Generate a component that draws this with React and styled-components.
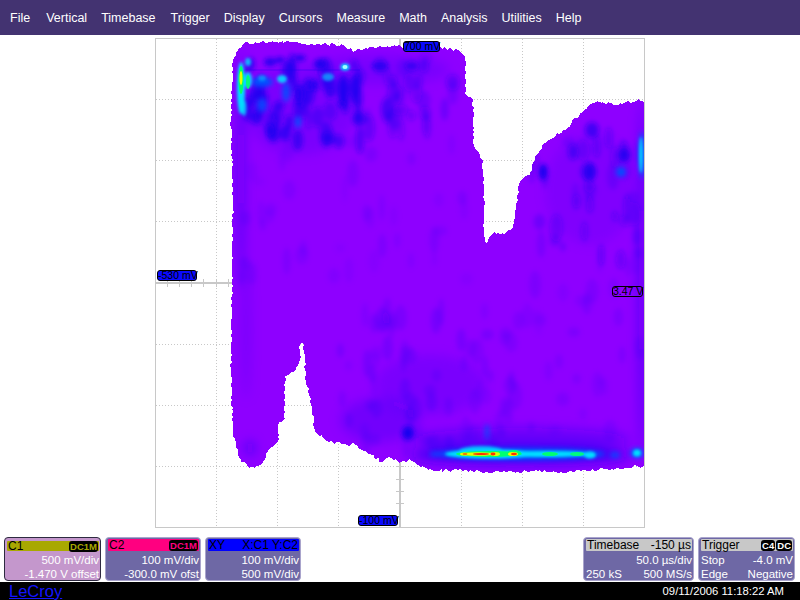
import React from 'react';
import styled, { createGlobalStyle } from 'styled-components';

const GlobalStyle = createGlobalStyle`
  html, body {
    margin: 0;
    padding: 0;
    background: #fff;
    font-family: "Liberation Sans", Arial, sans-serif;
  }
`;

const Screen = styled.div`
  width: 800px;
  height: 600px;
  display: flex;
  flex-direction: column;
  overflow: hidden;
`;

const MenuBar = styled.nav`
  height: 35px;
  flex: none;
  background: #433371;
  display: flex;
  align-items: center;
  gap: 14px;
  padding: 0 0 0 10px;
  color: #fff;
  font-size: 12.5px;
`;

const MenuItem = styled.span`
  margin-right: ${({ $extra }) => $extra || 0}px;
`;

const Stage = styled.main`
  flex: 1;
  display: flex;
  justify-content: center;
  padding-top: 3px;
`;

const Plot = styled.div`
  position: relative;
  width: 490px;
  height: 490px;
`;

const PlotSvg = styled.svg`
  display: block;
`;

const Marker = styled.span`
  position: absolute;
  left: ${({ $x }) => $x}px;
  top: ${({ $y }) => $y}px;
  width: ${({ $w }) => $w}px;
  height: 11px;
  box-sizing: border-box;
  border: 1px solid #000;
  border-radius: 3px;
  background: ${({ $clear }) => ($clear ? 'transparent' : '#0a0aff')};
  color: #000;
  font-size: 10.5px;
  line-height: 9px;
  text-align: center;
  white-space: nowrap;
`;

const InfoStrip = styled.section`
  height: 44px;
  flex: none;
  margin-bottom: 1px;
  padding: 0 5px 0 4px;
  display: flex;
  gap: 4px;
`;

const Spacer = styled.div`
  flex: 1;
`;

const Card = styled.div`
  width: ${({ $w }) => $w}px;
  height: 44px;
  box-sizing: border-box;
  border: 1px solid ${({ $active }) => ($active ? '#2e2a40' : '#a9a4cc')};
  border-radius: 4px;
  background: ${({ $active }) => ($active ? '#c497cc' : '#6e68a5')};
  color: #fff;
  font-size: 11.5px;
  line-height: 14px;
  padding: ${({ $active }) => ($active ? '3px' : '1px')} 1px 0 2px;
  display: flex;
  flex-direction: column;
`;

const CardTitle = styled.div`
  height: ${({ $short }) => ($short ? '10px' : '12px')};
  line-height: 12px;
  background: ${({ $color }) => $color};
  color: #000;
  display: flex;
  justify-content: space-between;
  align-items: center;
  padding: 0 1px;
  margin-bottom: 2px;
  border-radius: 1px;
  font-size: 12px;
  white-space: nowrap;
`;

const Badges = styled.span`
  display: flex;
  gap: 1px;
`;

const Coupling = styled.span`
  background: #000;
  color: ${({ $color }) => $color};
  font-size: 9.5px;
  font-weight: bold;
  line-height: 11px;
  padding: 0 1px;
  border-radius: 3px;
`;

const CardRow = styled.div`
  display: flex;
  justify-content: ${({ $split }) => ($split ? 'space-between' : 'flex-end')};
  height: 14px;
  white-space: nowrap;
`;

const Footer = styled.footer`
  height: 18px;
  flex: none;
  background: #000;
  display: flex;
  justify-content: space-between;
  align-items: center;
  padding: 0 16px 0 9px;
`;

const Brand = styled.a`
  color: #1414ff;
  font-size: 16.5px;
  text-decoration: underline;
  line-height: 18px;
`;

const Clock = styled.span`
  color: #fff;
  font-size: 11.3px;
`;

const menu = [
  ['File', 2], ['Vertical'], ['Timebase', 1], ['Trigger'], ['Display'], ['Cursors'],
  ['Measure'], ['Math'], ['Analysis'], ['Utilities'], ['Help'],
];

// trace outline, page coordinates
const outline = [
  [232, 283], [233, 200], [231, 120], [233, 60], [239, 48], [245, 43], [265, 42], [287, 42],
  [315, 44], [340, 45], [353, 50], [375, 48], [397, 46], [403, 47], [430, 47], [458, 50],
  [465, 57], [466, 80], [466, 96], [473, 98], [473, 143], [482, 160], [484, 190], [484, 235],
  [487, 242], [493, 232], [502, 235], [513, 228], [519, 187], [522, 178], [530, 175],
  [535, 157], [547, 140], [570, 127], [573, 120], [593, 102], [617, 104], [640, 100], [644, 102],
  [644, 300], [644, 466], [583, 471], [500, 472], [433, 470], [420, 467], [410, 460], [400, 462],
  [388, 457], [383, 462], [367, 453], [353, 443], [350, 445], [330, 442], [315, 432], [312, 407],
  [305, 377], [305, 360], [303, 343], [300, 345], [300, 360], [295, 370], [285, 375], [285, 417],
  [278, 423], [278, 442], [268, 450], [265, 460], [258, 467], [250, 468], [240, 460], [237, 447],
  [233, 437], [231, 360],
];

function makeRandom(start) {
  let seed = start;
  return () => {
    seed = (seed * 137 + 29) % 1009;
    return seed / 1009;
  };
}

function roughen(points) {
  const next = makeRandom(17);
  const out = [];
  points.forEach((p, i) => {
    const q = points[(i + 1) % points.length];
    const dx = q[0] - p[0];
    const dy = q[1] - p[1];
    const steps = Math.max(1, Math.round(Math.hypot(dx, dy) / 2.5));
    const straight = p[0] >= 644 && q[0] >= 644;
    const amp = straight ? 0 : Math.abs(dx) > Math.abs(dy) ? 3.2 : 1.6;
    for (let s = 0; s < steps; s++) {
      const t = s / steps;
      const x = p[0] + dx * t + (next() - 0.5) * amp;
      const y = p[1] + dy * t + (next() - 0.5) * amp;
      out.push(`${Math.round(x)},${Math.round(y)}`);
    }
  });
  return out.join(' ');
}

const BLUE = '#1800f0';
const MID = '#0050ff';
const CYAN = '#00e0ff';
const GREEN = '#00ff70';
const YELLOW = '#e8ff00';
const RED = '#ff3000';

// mottled texture: [x0, y0, x1, y1, count, strength]
function scatter([x0, y0, x1, y1, count, strength], seed) {
  const next = makeRandom(seed);
  return Array.from({ length: count }, () => [
    x0 + next() * (x1 - x0),
    y0 + next() * (y1 - y0),
    3 + next() * 4,
    5 + next() * 9,
    BLUE,
    strength * (0.4 + next() * 0.6),
  ]);
}

const texture = [
  ...scatter([245, 55, 360, 150, 50, 0.75], 11),
  ...scatter([350, 55, 465, 130, 30, 0.35], 23),
  ...scatter([240, 140, 470, 280, 40, 0.12], 37),
  ...scatter([530, 130, 640, 260, 36, 0.32], 53),
  ...scatter([520, 260, 640, 440, 30, 0.12], 71),
  ...scatter([340, 310, 520, 445, 70, 0.17], 97),
];

// [cx, cy, rx, ry, colour, opacity]
const wide = [
  [241, 170, 2, 120, BLUE, 0.7], [246, 330, 4, 70, BLUE, 0.18], [250, 448, 5, 7, BLUE, 0.5],
  [300, 110, 55, 45, BLUE, 0.14], [380, 70, 70, 15, BLUE, 0.15],
  [430, 385, 55, 30, BLUE, 0.14], [380, 420, 40, 22, BLUE, 0.2],
  [520, 440, 110, 12, BLUE, 0.35], [520, 455, 110, 8, BLUE, 0.8], [642, 280, 2, 180, BLUE, 0.8],
  [590, 190, 45, 55, BLUE, 0.1],
];

const mid = [
  [270, 62, 6, 4, BLUE, 0.9], [280, 60, 5, 3, BLUE, 0.9], [300, 58, 6, 3, BLUE, 0.9],
  [320, 64, 6, 5, BLUE, 0.9], [262, 82, 11, 5, MID, 1], [286, 92, 4, 10, MID, 0.9],
  [298, 95, 3, 9, BLUE, 0.9], [262, 105, 5, 7, MID, 0.8], [298, 122, 3, 6, MID, 1],
  [315, 85, 3, 6, BLUE, 0.8], [342, 104, 3, 3, BLUE, 0.9], [270, 130, 4, 7, BLUE, 0.6],
  [380, 66, 8, 4, BLUE, 0.8], [412, 66, 7, 5, BLUE, 0.6], [400, 110, 8, 6, BLUE, 0.3],
  [543, 172, 4, 8, BLUE, 1], [592, 130, 7, 8, BLUE, 0.6], [590, 172, 6, 9, BLUE, 0.8],
  [621, 172, 5, 5, MID, 1], [624, 155, 6, 7, BLUE, 0.8], [573, 152, 5, 8, BLUE, 0.5],
  [408, 433, 6, 7, BLUE, 1], [487, 432, 2, 8, MID, 0.9], [642, 155, 3, 24, MID, 1],
  [520, 454, 85, 6, MID, 1], [435, 454, 5, 2, MID, 1], [615, 455, 5, 3, MID, 0.9],
  [637, 453, 7, 5, MID, 1],
];

const hot = [
  [241, 88, 4, 26, CYAN, 1], [244, 108, 2.5, 8, CYAN, 0.8], [248, 62, 3, 4, CYAN, 0.8],
  [248, 80, 4, 8, CYAN, 0.9], [262, 78, 4, 3, CYAN, 0.5], [282, 79, 5, 4, CYAN, 0.9],
  [345, 67, 4.5, 3.5, CYAN, 1], [328, 77, 6, 4, CYAN, 0.6], [641, 155, 2, 18, CYAN, 0.9],
  [490, 454, 45, 4.5, CYAN, 1], [545, 454, 50, 3, CYAN, 1], [590, 455, 6, 3.5, CYAN, 1],
  [637, 453, 4, 3.5, CYAN, 1], [481, 451, 22, 5, CYAN, 0.8],
];

const core = [
  [241, 80, 2.5, 14, GREEN, 1], [241, 78, 1.5, 7, YELLOW, 1], [248, 82, 2, 7, GREEN, 0.9],
  [345, 67, 2.5, 2, '#a0ffff', 1], [489, 454, 33, 3, GREEN, 1], [550, 454, 8, 2, GREEN, 1],
  [577, 454, 7, 2, GREEN, 0.9], [514, 453, 7, 3, GREEN, 1], [478, 454, 17, 1.8, YELLOW, 1],
  [464, 454, 4, 1.6, YELLOW, 1], [513, 454, 5, 2, YELLOW, 1], [495, 454, 5, 2, YELLOW, 0.9],
];

const red = [
  [481, 454, 8, 1, RED, 1], [465, 454, 2.5, 0.9, RED, 0.7], [514, 454, 3, 1.2, RED, 1],
  [493, 454, 2.5, 1.4, RED, 1],
];

function Blobs({ items, filter }) {
  return (
    <g filter={`url(#${filter})`}>
      {items.map(([cx, cy, rx, ry, fill, op], i) => (
        <ellipse key={i} cx={cx} cy={cy} rx={rx} ry={ry} fill={fill} fillOpacity={op} />
      ))}
    </g>
  );
}

const gridX = [216.5, 277.5, 338.5, 461.5, 522.5, 583.5];
const gridY = [99.5, 160.5, 221.5, 344.5, 405.5, 466.5];
const ticks = Array.from({ length: 39 }, (_, i) => 167 + i * 12.25);
const tracePoints = roughen(outline);

function Scope() {
  return (
    <PlotSvg width="490" height="490" viewBox="155 38 490 490">
      <defs>
        <clipPath id="trace">
          <polygon points={tracePoints} />
        </clipPath>
        <filter id="b8" x="-50%" y="-50%" width="200%" height="200%"><feGaussianBlur stdDeviation="6" /></filter>
        <filter id="b3" x="-50%" y="-50%" width="200%" height="200%"><feGaussianBlur stdDeviation="2.5" /></filter>
        <filter id="b2" x="-50%" y="-100%" width="200%" height="300%"><feGaussianBlur stdDeviation="1.4" /></filter>
        <filter id="b1" x="-50%" y="-100%" width="200%" height="300%"><feGaussianBlur stdDeviation="0.7" /></filter>
      </defs>
      <g stroke="#c8c8c8" strokeWidth="1" strokeDasharray="1 2" shapeRendering="crispEdges">
        {gridX.map((x) => <line key={x} x1={x} x2={x} y1="39" y2="527" />)}
        {gridY.map((y) => <line key={y} x1="156" x2="644" y1={y} y2={y} />)}
      </g>
      <g stroke="#c8c8c8" shapeRendering="crispEdges">
        <line x1="156" x2="644" y1="283" y2="283" strokeWidth="2" />
        <line x1="400" x2="400" y1="39" y2="527" strokeWidth="2" />
        {ticks.map((t) => <line key={t} x1={t} x2={t} y1="279" y2="287" />)}
        {ticks.map((t) => <line key={t} x1="396" x2="404" y1={t - 129} y2={t - 129} />)}
      </g>
      <rect x="155.5" y="38.5" width="489" height="489" fill="none" stroke="#c8c8c8" strokeWidth="1.5" shapeRendering="crispEdges" />
      <polygon points={tracePoints} fill="#8e00ff" shapeRendering="crispEdges" />
      <g clipPath="url(#trace)">
        <Blobs items={wide} filter="b8" />
        <Blobs items={texture} filter="b3" />
        <Blobs items={mid} filter="b3" />
        <line x1="240" x2="360" y1="70" y2="70" stroke={BLUE} strokeOpacity="0.4" />
        <Blobs items={hot} filter="b2" />
        <Blobs items={core} filter="b1" />
        <Blobs items={red} filter="b1" />
      </g>
    </PlotSvg>
  );
}

function App() {
  return (
    <Screen>
      <GlobalStyle />
      <MenuBar>
        {menu.map(([label, extra]) => (
          <MenuItem key={label} $extra={extra}>{label}</MenuItem>
        ))}
      </MenuBar>
      <Stage>
        <Plot>
          <Scope />
          <Marker $x={248} $y={3} $w={37}>700 mV</Marker>
          <Marker $x={2} $y={232} $w={40}>-530 mV</Marker>
          <Marker $x={457} $y={248} $w={31} $clear>3.47 V</Marker>
          <Marker $x={203} $y={477} $w={40}>-100 mV</Marker>
        </Plot>
      </Stage>
      <InfoStrip>
        <Card $w={97} $active>
          <CardTitle $short $color="#a8a800">C1<Coupling $color="#a8a800">DC1M</Coupling></CardTitle>
          <CardRow>500 mV/div</CardRow>
          <CardRow>-1.470 V offset</CardRow>
        </Card>
        <Card $w={96}>
          <CardTitle $color="#ff0080">C2<Coupling $color="#ff0080">DC1M</Coupling></CardTitle>
          <CardRow>100 mV/div</CardRow>
          <CardRow>-300.0 mV ofst</CardRow>
        </Card>
        <Card $w={96}>
          <CardTitle $color="#0000ff">XY<span>X:C1 Y:C2</span></CardTitle>
          <CardRow>100 mV/div</CardRow>
          <CardRow>500 mV/div</CardRow>
        </Card>
        <Spacer />
        <Card $w={111}>
          <CardTitle $color="#c8c8c8">Timebase<span>-150 µs</span></CardTitle>
          <CardRow>50.0 µs/div</CardRow>
          <CardRow $split><span>250 kS</span><span>500 MS/s</span></CardRow>
        </Card>
        <Card $w={97}>
          <CardTitle $color="#c8c8c8">
            Trigger
            <Badges>
              <Coupling $color="#fff">C4</Coupling>
              <Coupling $color="#fff">DC</Coupling>
            </Badges>
          </CardTitle>
          <CardRow $split><span>Stop</span><span>-4.0 mV</span></CardRow>
          <CardRow $split><span>Edge</span><span>Negative</span></CardRow>
        </Card>
      </InfoStrip>
      <Footer>
        <Brand>LeCroy</Brand>
        <Clock>09/11/2006 11:18:22 AM</Clock>
      </Footer>
    </Screen>
  );
}

export default App;
